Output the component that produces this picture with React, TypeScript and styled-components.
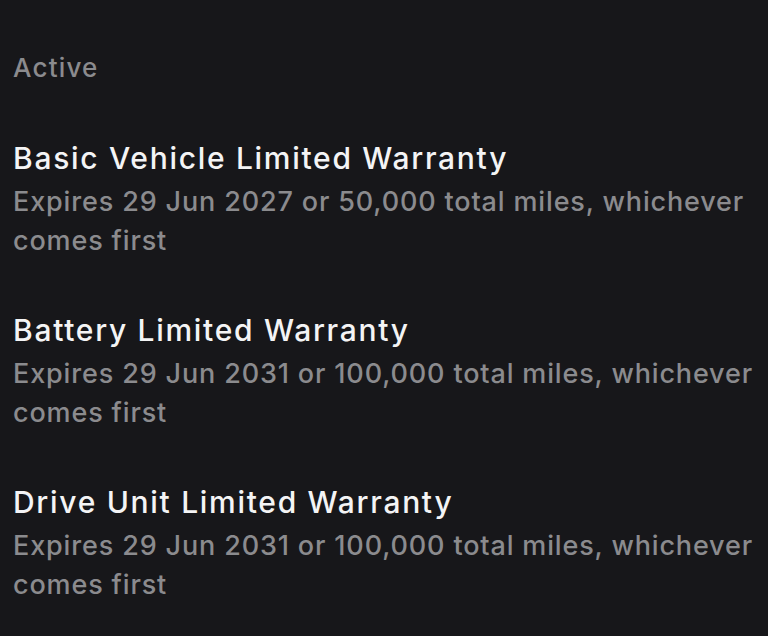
import React from "react";
import styled, { createGlobalStyle } from "styled-components";

const Global = createGlobalStyle`
  html, body { margin: 0; padding: 0; background: #17171a; }
  body { font-family: Inter, "Noto Sans", sans-serif; }
`;

const Page = styled.div`
  min-height: 636px;
  background: #17171a;
  padding: 48px 13px 0;
  box-sizing: border-box;
  display: flex;
  flex-direction: column;
  gap: 50px;
`;

const SectionLabel = styled.div`
  font-size: 26px;
  line-height: 40px;
  font-weight: 500;
  letter-spacing: 1.2px;
  color: #8b8b8e;
`;

const List = styled.div`
  display: flex;
  flex-direction: column;
  gap: 50px;
`;

const Item = styled.div`
  display: flex;
  flex-direction: column;
  gap: 4px;
`;

const Title = styled.div`
  font-size: 30px;
  line-height: 40px;
  font-weight: 500;
  letter-spacing: 1.7px;
  color: #f4f4f5;
`;

const Sub = styled.div`
  font-size: 27px;
  line-height: 39px;
  font-weight: 500;
  letter-spacing: 0.85px;
  color: #8b8b8e;
  max-width: 752px;
`;

const items = [
  { title: "Basic Vehicle Limited Warranty", sub: "Expires 29 Jun 2027 or 50,000 total miles, whichever comes first" },
  { title: "Battery Limited Warranty", sub: "Expires 29 Jun 2031 or 100,000 total miles, whichever comes first" },
  { title: "Drive Unit Limited Warranty", sub: "Expires 29 Jun 2031 or 100,000 total miles, whichever comes first" },
];

export default function App() {
  return (
    <>
      <Global />
      <Page>
        <SectionLabel>Active</SectionLabel>
        <List>
          {items.map((it) => (
            <Item key={it.title}>
              <Title>{it.title}</Title>
              <Sub>{it.sub}</Sub>
            </Item>
          ))}
        </List>
      </Page>
    </>
  );
}
